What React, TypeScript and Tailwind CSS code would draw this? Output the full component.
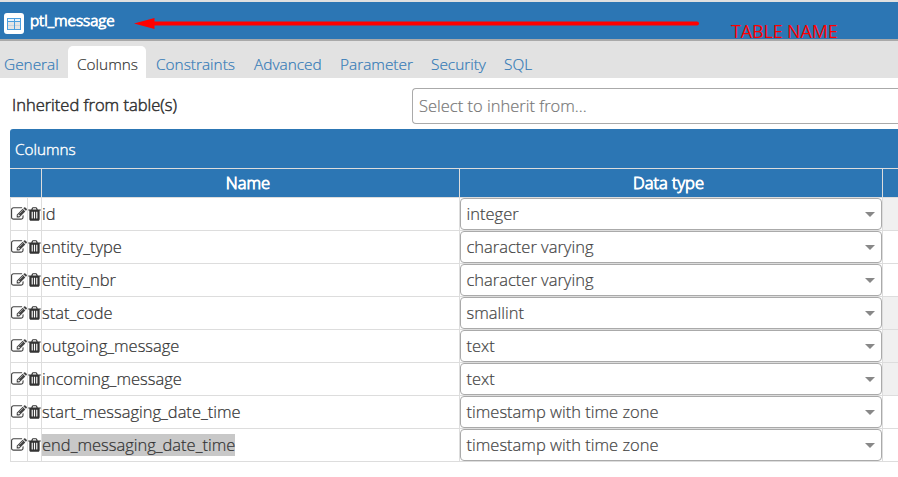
import React from "react";

const tabs = [
  { label: "General", width: "w-[68px]" },
  { label: "Columns", width: "w-[78px]", active: true },
  { label: "Constraints", width: "w-[98px]" },
  { label: "Advanced", width: "w-[86px]" },
  { label: "Parameter", width: "w-[91px]" },
  { label: "Security", width: "w-[73px]" },
  { label: "SQL", width: "w-[46px]" },
];

const rows = [
  { name: "id", type: "integer", shaded: true },
  { name: "entity_type", type: "character varying" },
  { name: "entity_nbr", type: "character varying" },
  { name: "stat_code", type: "smallint", shaded: true },
  { name: "outgoing_message", type: "text", shaded: true },
  { name: "incoming_message", type: "text", shaded: true },
  { name: "start_messaging_date_time", type: "timestamp with time zone" },
  { name: "end_messaging_date_time", type: "timestamp with time zone", selected: true },
];

const gridCols = "grid grid-cols-[17px_14px_418px_423px_16px]";

function TableIcon() {
  return (
    <svg className="h-[14px] w-[14px]" viewBox="0 0 14 14" shapeRendering="crispEdges">
      <rect x="0" y="1" width="14" height="12" fill="#4b9fdf" />
      <rect x="1" y="2" width="12" height="2" fill="#e8f4fd" />
      <rect x="1" y="5" width="12" height="7" fill="#e4e4e4" />
      <path d="M1 8.5h12" stroke="#c4d4e0" strokeWidth="1" />
      <path d="M1 4.5h12M7.5 1v12" stroke="#4b9fdf" strokeWidth="1" />
    </svg>
  );
}

function EditIcon() {
  return (
    <svg className="h-4 w-4" viewBox="0 0 1792 1792" fill="#444">
      <path d="M888 1184l116-116-152-152-116 116v56h96v96h56zm440-720q-16-16-33 1l-350 350q-17 17-1 33t33-1l350-350q17-17 1-33zm80 594v190q0 119-84.5 203.5t-203.5 84.5h-832q-119 0-203.5-84.5t-84.5-203.5v-832q0-119 84.5-203.5t203.5-84.5h832q63 0 117 25 15 7 18 23 3 17-9 29l-49 49q-14 14-32 8-23-6-45-6h-832q-66 0-113 47t-47 113v832q0 66 47 113t113 47h832q66 0 113-47t47-113v-126q0-13 9-22l64-64q15-15 35-7t20 29zm-96-738l288 288-672 672h-288v-288zm444 132l-92 92-288-288 92-92q28-28 68-28t68 28l152 152q28 28 28 68t-28 68z" />
    </svg>
  );
}

function TrashIcon() {
  return (
    <svg className="h-4 w-[13px]" viewBox="192 0 1408 1792" fill="#333">
      <path d="M704 1376v-704q0-14-9-23t-23-9h-64q-14 0-23 9t-9 23v704q0 14 9 23t23 9h64q14 0 23-9t9-23zm256 0v-704q0-14-9-23t-23-9h-64q-14 0-23 9t-9 23v704q0 14 9 23t23 9h64q14 0 23-9t9-23zm256 0v-704q0-14-9-23t-23-9h-64q-14 0-23 9t-9 23v704q0 14 9 23t23 9h64q14 0 23-9t9-23zm-544-992h448l-48-117q-7-9-17-11h-317q-10 2-17 11zm928 32v64q0 14-9 23t-23 9h-96v948q0 83-47 143.5t-113 60.5h-832q-66 0-113-58.5t-47-141.5v-952h-96q-14 0-23-9t-9-23v-64q0-14 9-23t23-9h309l70-167q15-37 54-63t79-26h320q40 0 79 26t54 63l70 167h309q14 0 23 9t9 23z" />
    </svg>
  );
}

function TypeSelect({ value }: { value: string }) {
  return (
    <div className="flex h-8 w-[422px] items-center justify-between rounded-[4px] border border-[#aaa] bg-white pr-[6px] pl-[5.5px] text-[#444]">
      <span>{value}</span>
      <span className="border-x-[5px] border-t-[5px] border-x-transparent border-t-[#888]" />
    </div>
  );
}

export default function App() {
  return (
    <div className="relative h-[477px] w-[898px] overflow-hidden bg-white font-['Open_Sans','Noto_Sans',sans-serif] text-[16.5px] leading-6 font-light whitespace-nowrap text-[#333] [-webkit-text-stroke:0.2px_currentColor]">
      <header className="flex h-[41px] items-start border-t-2 border-b-2 border-t-[#e0e0e0] border-b-[#a9a9a9] bg-[#2c76b4] pl-1 text-white">
        <span className="mt-[11px] flex h-[21px] w-5 items-center justify-center rounded-[3px] bg-white">
          <TableIcon />
        </span>
        <h1 className="mt-[7px] ml-[6px] text-[15.3px] leading-[22px] font-light [-webkit-text-stroke:0.9px_white]">ptl_message</h1>
      </header>

      <nav className="flex h-[37px] items-end bg-[#e2e2e2] text-[15.4px] text-[#337ab7]">
        {tabs.map((tab) => (
          <div
            key={tab.label}
            className={`flex h-8 items-center ${tab.width} ${
              tab.active ? "justify-center rounded-t-[5px] bg-white pl-px text-[#333]" : "first:pl-1 pl-[10px]"
            }`}
          >
            <span className="mt-[5px]">{tab.label}</span>
          </div>
        ))}
      </nav>

      <section className="flex h-[51px] items-start">
        <label className="mt-[16px] w-[412px] pl-3 leading-[22px] [-webkit-text-stroke:0.5px_#333]">
          Inherited from table(s)
        </label>
        <div className="mt-[10px] flex h-9 flex-1 items-center rounded-l-[4px] border border-r-0 border-[#aaa] pl-[6px] text-[#777]">
          Select to inherit from...
        </div>
      </section>

      <section className="ml-[10px]">
        <div className="flex h-10 items-center rounded-tl-[3px] border-b border-[#ddd] bg-[#2c76b4] pl-[5px] text-[15.3px] text-white [-webkit-text-stroke:0.4px_white]">
          Columns
        </div>
        <div className={`${gridCols} h-7 bg-[#2c76b4] text-center leading-7 text-white [-webkit-text-stroke:0.9px_white]`}>
          <div className="col-span-2" />
          <div className="border-l border-[#ddd] pr-[5px]">Name</div>
          <div className="border-l border-[#ddd] pr-[5px]">Data type</div>
          <div className="border-l border-[#ddd]" />
        </div>
        <div className="border-b border-[#ddd]">
          {rows.map((row) => (
            <div key={row.name} className={`${gridCols} h-[33px] border-t border-[#ddd]`}>
              <div className="flex items-center border-l border-[#ddd]">
                <EditIcon />
              </div>
              <div className="flex items-center border-l border-[#ddd]">
                <TrashIcon />
              </div>
              <div className="flex items-center border-l border-[#ddd]">
                <span className={row.selected ? "bg-[#c8c8c8] leading-[22px]" : "leading-[22px]"}>{row.name}</span>
              </div>
              <div className="border-l border-[#ddd]">
                <TypeSelect value={row.type} />
              </div>
              <div className={`border-l border-[#ddd] ${row.shaded ? "bg-[#f0f0f0]" : ""}`} />
            </div>
          ))}
        </div>
      </section>

      <svg className="absolute top-[17px] left-[134px] h-[14px] w-[566px]" viewBox="0 0 566 14">
        <path d="M15 6.5H563" stroke="#f00" strokeWidth="4" strokeLinecap="round" />
        <path d="M0 6.5L20.5 1v11z" fill="#f00" />
      </svg>
      <div className="absolute top-[19px] left-[731px] text-[18px] leading-6 font-normal tracking-[-0.15px] text-[#f00] [-webkit-text-stroke:0px]">
        TABLE NAME
      </div>
    </div>
  );
}
